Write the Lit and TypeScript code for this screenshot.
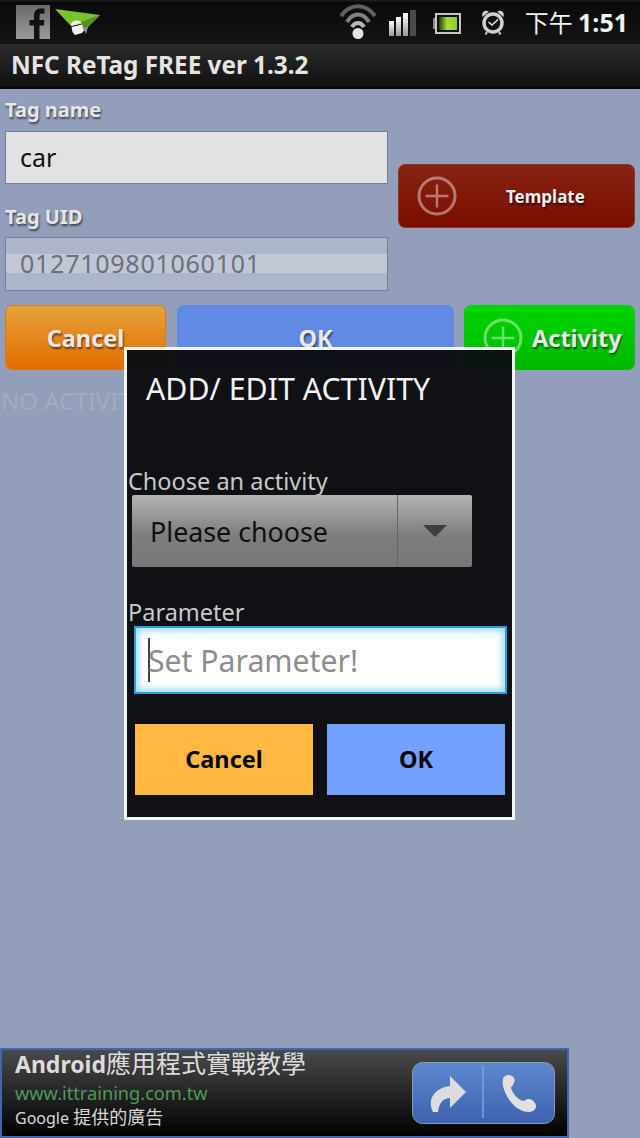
import { LitElement, html, css } from "lit";
import { customElement } from "lit/decorators.js";

const plus = () => html`<svg class="plus" viewBox="0 0 40 40" width="40" height="40" aria-hidden="true">
  <circle cx="20" cy="20" r="18" fill="none" stroke="rgba(255,255,255,.42)" stroke-width="3"></circle>
  <path d="M20 8.500V31.500M8.500 20H31.500" stroke="rgba(255,255,255,.42)" stroke-width="2.500" fill="none"></path>
</svg>`;

@customElement("app-root")
export class AppRoot extends LitElement {
  static styles = css`
    :host {
      display: flex;
      flex-direction: column;
      position: relative;
      width: 640px;
      height: 1138px;
      overflow: hidden;
      background: #929eba;
      font-family: "Noto Sans", "Open Sans", "Noto Sans CJK TC", sans-serif;
    }
    .status {
      height: 44px;
      flex: none;
      box-sizing: border-box;
      display: flex;
      align-items: flex-start;
      background: linear-gradient(#1c1c1c 0, #1c1c1c 1px, #0a0a0a 2px, #141414 100%);
    }
    .fb { margin: 5px 0 0 16px; display: block; }
    .plane { margin: 9px 0 0 5px; display: block; }
    .status-right { margin-left: auto; display: flex; align-items: flex-start; }
    .wifi { display: block; margin-top: 4px; }
    .signal { margin: 10px 0 0 12px; display: block; }
    .battery { margin: 13px 0 0 17px; display: block; }
    .alarm { margin: 9px 0 0 20px; display: block; }
    .clock {
      margin: 6px 12px 0 20px;
      color: #f2f2f2;
      font-size: 24px;
      line-height: 32px;
      white-space: nowrap;
      font-family: "Noto Sans CJK TC", sans-serif;
    }
    .clock b { font-family: "Noto Sans", sans-serif; font-weight: 700; font-size: 25px; }
    .title {
      height: 45px;
      flex: none;
      box-sizing: border-box;
      padding-left: 11px;
      background: linear-gradient(#2b2b2b, #101010);
      border-bottom: 2px solid #050505;
      color: #e4e4e4;
      font-weight: 700;
      font-size: 24.300px;
      line-height: 42px;
      white-space: nowrap;
    }
    .content {
      flex: 1;
      min-height: 0;
      padding: 0 5px;
      display: flex;
      flex-direction: column;
    }
    .top { display: flex; gap: 10px; align-items: flex-start; }
    .fields { width: 383px; flex: none; }
    .lbl {
      color: #e6e6e6;
      font-weight: 700;
      font-size: 20px;
      line-height: 26px;
      text-shadow: 1px 2px 2px rgba(40, 40, 50, .75);
    }
    .lbl.first { margin: 8px 0 8px 0; }
    .lbl.second { margin: 20px 0 7px 0; }
    .input {
      box-sizing: border-box;
      height: 53px;
      padding-left: 14px;
      border: 1px solid #747f99;
      background: #e2e2e2;
      color: #111;
      font-size: 25px;
      line-height: 51px;
    }
    .input.dis {
      height: 54px;
      color: #6b7080;
      background: linear-gradient(#adb5ca 0 16px, #c2c7d6 16px 35px, #adb5ca 35px);
      letter-spacing: .75px;
    }
    .template {
      box-sizing: border-box;
      margin-top: 75px;
      width: 237px;
      height: 64px;
      border-radius: 7px;
      background: linear-gradient(#882313, #7a0e00);
      border: 1px solid #85382e;
      display: flex;
      align-items: center;
      padding-left: 18px;
      color: #eee;
      font-weight: 700;
      font-size: 17px;
      text-shadow: 1px 2px 2px rgba(0, 0, 0, .7);
    }
    .template span { margin-left: 49px; }
    .plus { display: block; flex: none; }
    .actions { display: flex; margin-top: 14px; gap: 11px; }
    .btn {
      box-sizing: border-box;
      height: 65px;
      border-radius: 7px;
      display: flex;
      align-items: center;
      justify-content: center;
      color: #e8e8e8;
      font-weight: 700;
      font-size: 23.500px;
      text-shadow: 1px 2px 2px rgba(0, 0, 0, .55);
    }
    .orange { width: 161px; background: linear-gradient(#e5a33c, #e36c00); border: 1px solid #dd7a14; }
    .blue { width: 277px; background: #618ae3; }
    .green {
      width: 171px;
      margin-left: -1px;
      background: linear-gradient(#00d500, #00b800);
      justify-content: flex-start;
      padding-left: 19px;
      gap: 9px;
    }
    .none {
      margin: 17px 0 0 -4px;
      color: #a5abbc;
      font-size: 24px;
      line-height: 28px;
      white-space: nowrap;
    }
    .ad {
      flex: none;
      box-sizing: border-box;
      width: 569px;
      height: 90px;
      border: 2px solid #3f66b0;
      background: linear-gradient(#4a4a4a, #000);
      display: flex;
      align-items: flex-start;
      justify-content: space-between;
      padding: 0 12px 0 13px;
    }
    .ad-text { display: flex; flex-direction: column; }
    .ad-title { color: #dcdcdc; font-size: 25px; line-height: 24px; font-family: "Noto Sans CJK TC", sans-serif; white-space: nowrap; }
    .ad-title b { font-family: "Noto Sans", sans-serif; font-weight: 700; font-size: 23px; }
    .ad-url { color: #4d9a5a; font-size: 18.200px; line-height: 26px; margin-top: 4px; }
    .ad-by { color: #d8d8d8; font-size: 16px; line-height: 21px; font-family: "Noto Sans", "Noto Sans CJK TC", sans-serif; white-space: nowrap; }
    .ad-by span { font-size: 18px; font-family: "Noto Sans CJK TC", sans-serif; }
    .ad-btn { display: block; flex: none; margin-top: 12px; }
    .dialog {
      position: absolute;
      left: 124px;
      top: 347px;
      width: 391px;
      height: 473px;
      box-sizing: border-box;
      border: 3px solid #f4f5f7;
      background: rgba(10, 12, 16, .97);
      display: flex;
      flex-direction: column;
      color: #c9c9c9;
    }
    .d-title { color: #f2f2f2; font-size: 30.300px; line-height: 40px; margin: 19px 0 0 19px; white-space: nowrap; }
    .d-lbl { font-size: 23.500px; line-height: 30px; margin-left: 1px; white-space: nowrap; }
    .d-lbl.a { margin-top: 57px; }
    .d-lbl.b { margin-top: 30px; }
    .spinner {
      box-sizing: border-box;
      margin: -1px 0 0 5px;
      width: 340px;
      height: 72px;
      border-radius: 2px;
      background: linear-gradient(#b4b4b4, #7e7e7e 55%, #777);
      display: flex;
      align-items: stretch;
      color: #101010;
      font-size: 26.800px;
    }
    .sp-text { flex: 1; display: flex; align-items: center; padding-left: 18px; border-right: 1px solid #666; }
    .sp-arrow { width: 74px; display: flex; align-items: center; justify-content: center; }
    .tri { width: 0; height: 0; border-left: 12px solid transparent; border-right: 12px solid transparent; border-top: 12px solid #3f3f3f; }
    .d-input {
      box-sizing: border-box;
      margin: -1px 0 0 7px;
      width: 373px;
      height: 68px;
      border: 2px solid #2aa0d8;
      background: #fff;
      box-shadow: inset 0 0 6px 3px #9fdcf5;
      display: flex;
      align-items: center;
      padding-left: 12px;
      color: #8c8c8c;
      font-size: 30.200px;
    }
    .caret { width: 2px; height: 44px; background: #444; margin-right: -2px; flex: none; }
    .d-actions { display: flex; gap: 14px; margin: 30px 0 0 8px; }
    .d-btn {
      box-sizing: border-box;
      width: 178px;
      height: 71px;
      padding-bottom: 2px;
      display: flex;
      align-items: center;
      justify-content: center;
      color: #050505;
      font-weight: 700;
      font-size: 23.500px;
    }
    .d-btn.o { background: #ffb942; }
    .d-btn.b { background: #74a1ff; }
  `;

  render() {
    return html`
      <div class="status">
        <svg class="fb" width="34" height="34" viewBox="0 0 34 34" aria-hidden="true">
          <defs><linearGradient id="fbg" x1="0" y1="0" x2="0" y2="1"><stop offset="0" stop-color="#6a6a6a"></stop><stop offset="1" stop-color="#9a9a9a"></stop></linearGradient></defs>
          <rect width="34" height="34" fill="url(#fbg)"></rect>
          <path d="M18 34V20.500h-4.500v-5.500H18v-4.500C18 6 20.500 3.500 25 3.500h3.500v5H26c-1.800 0-2.500.8-2.500 2.500v4h5l-.8 5.500h-4.200V34z" fill="#111"></path>
        </svg>
        <svg class="plane" width="46" height="28" viewBox="0 0 46 28" aria-hidden="true">
          <path d="M0 0 45 6 30 21 26 15 16 17z" fill="#78c22c"></path>
          <path d="M45 6 26 13 30 21z" fill="#558f20"></path>
          <path d="M28 19 33 18 31 25z" fill="#7f95a8"></path>
          <path d="M16 15.500C16.500 11 25 10 26.500 14L16.500 17zM16.500 18 27 15.500 29 21.500 27 24 20 26 17.500 23z" fill="#f0f0f0"></path>
        </svg>
        <div class="status-right">
          <svg class="wifi" width="38" height="36" viewBox="0 0 38 36" aria-hidden="true">
            <path d="M2 12C11 -1 27 -1 36 12" fill="none" stroke="#606060" stroke-width="4"></path>
            <path d="M8 18C14 8 24 8 30 18" fill="none" stroke="#808080" stroke-width="4"></path>
            <path d="M13 23C16 17.500 22 17.500 25 23" fill="none" stroke="#b8b8b8" stroke-width="4"></path>
            <circle cx="19" cy="29.500" r="5.500" fill="#e4e4e4"></circle>
          </svg>
          <svg class="signal" width="27" height="26" viewBox="0 0 27 26" aria-hidden="true">
            <defs><linearGradient id="sg" x1="0" y1="0" x2="0" y2="1"><stop offset="0" stop-color="#fff"></stop><stop offset="1" stop-color="#999"></stop></linearGradient></defs>
            <rect x="0" y="11" width="5" height="15" fill="url(#sg)"></rect>
            <rect x="7" y="7" width="5" height="19" fill="url(#sg)"></rect>
            <rect x="14" y="3" width="5" height="23" fill="url(#sg)"></rect>
            <rect x="21" y="0" width="6" height="26" fill="#4a4a4a"></rect>
          </svg>
          <svg class="battery" width="28" height="21" viewBox="0 0 28 21" aria-hidden="true">
            <defs><linearGradient id="bg" x1="0" y1="0" x2="1" y2="0"><stop offset="0" stop-color="#223a0a"></stop><stop offset=".45" stop-color="#a4e030"></stop><stop offset="1" stop-color="#8cc83c"></stop></linearGradient></defs>
            <rect x="0" y="5" width="3" height="11" fill="#888"></rect>
            <rect x="3" y="1" width="24" height="19" fill="#111" stroke="#c8c8b8" stroke-width="2"></rect>
            <rect x="6" y="4" width="18" height="13" fill="url(#bg)"></rect>
          </svg>
          <svg class="alarm" width="24" height="26" viewBox="0 0 24 26" aria-hidden="true">
            <circle cx="12" cy="14" r="9" fill="#111" stroke="#d0d0d0" stroke-width="3.500"></circle>
            <path d="M1.500 8C0 3 4 .5 8 2.500zM22.500 8C24 3 20 .5 16 2.500z" fill="#d0d0d0"></path>
            <path d="M7.500 13 11 16 17 10.500" fill="none" stroke="#e8e8e8" stroke-width="1.500"></path>
            <path d="M6 23l-1.500 2.500M18 23l1.500 2.500" stroke="#d0d0d0" stroke-width="2"></path>
          </svg>
          <div class="clock">下午 <b>1:51</b></div>
        </div>
      </div>
      <div class="title">NFC ReTag FREE ver 1.3.2</div>
      <div class="content">
        <div class="top">
          <div class="fields">
            <div class="lbl first">Tag name</div>
            <div class="input">car</div>
            <div class="lbl second">Tag UID</div>
            <div class="input dis">0127109801060101</div>
          </div>
          <div class="template">${plus()}<span>Template</span></div>
        </div>
        <div class="actions">
          <div class="btn orange">Cancel</div>
          <div class="btn blue">OK</div>
          <div class="btn green">${plus()}<span>Activity</span></div>
        </div>
        <div class="none">NO ACTIVITY</div>
      </div>
      <div class="ad">
        <div class="ad-text">
          <div class="ad-title"><b>Android</b>應用程式實戰教學</div>
          <div class="ad-url">www.ittraining.com.tw</div>
          <div class="ad-by">Google <span>提供的廣告</span></div>
        </div>
        <svg class="ad-btn" width="143" height="62" viewBox="0 0 143 62" aria-hidden="true">
          <defs><linearGradient id="abg" x1="0" y1="0" x2="0" y2="1"><stop offset="0" stop-color="#5f88cf"></stop><stop offset="1" stop-color="#3c62ae"></stop></linearGradient></defs>
          <rect x=".5" y=".5" width="142" height="61" rx="10" fill="url(#abg)" stroke="#8a9ab8"></rect>
          <path d="M71 4V56" stroke="#7fa2de" stroke-width="1.500"></path>
          <path d="M21 50C15 38 22 26 38 24V14L54 30 38 46V36C31 36 27 41 26 50z" fill="#dcdcdc"></path>
          <path d="M91 17C92 12 100 12 102 16 104 20 100 24 99 26 101 32 106 38 112 39 115 36 120 36 123 41 126 46 122 50 117 50 106 50 97 40 93 30 91 25 90 21 91 17z" fill="#e0e0e0"></path>
        </svg>
      </div>
      <div class="dialog">
        <div class="d-title">ADD/ EDIT ACTIVITY</div>
        <div class="d-lbl a">Choose an activity</div>
        <div class="spinner">
          <div class="sp-text">Please choose</div>
          <div class="sp-arrow"><div class="tri"></div></div>
        </div>
        <div class="d-lbl b">Parameter</div>
        <div class="d-input"><span class="caret"></span>Set Parameter!</div>
        <div class="d-actions">
          <div class="d-btn o">Cancel</div>
          <div class="d-btn b">OK</div>
        </div>
      </div>
    `;
  }
}
